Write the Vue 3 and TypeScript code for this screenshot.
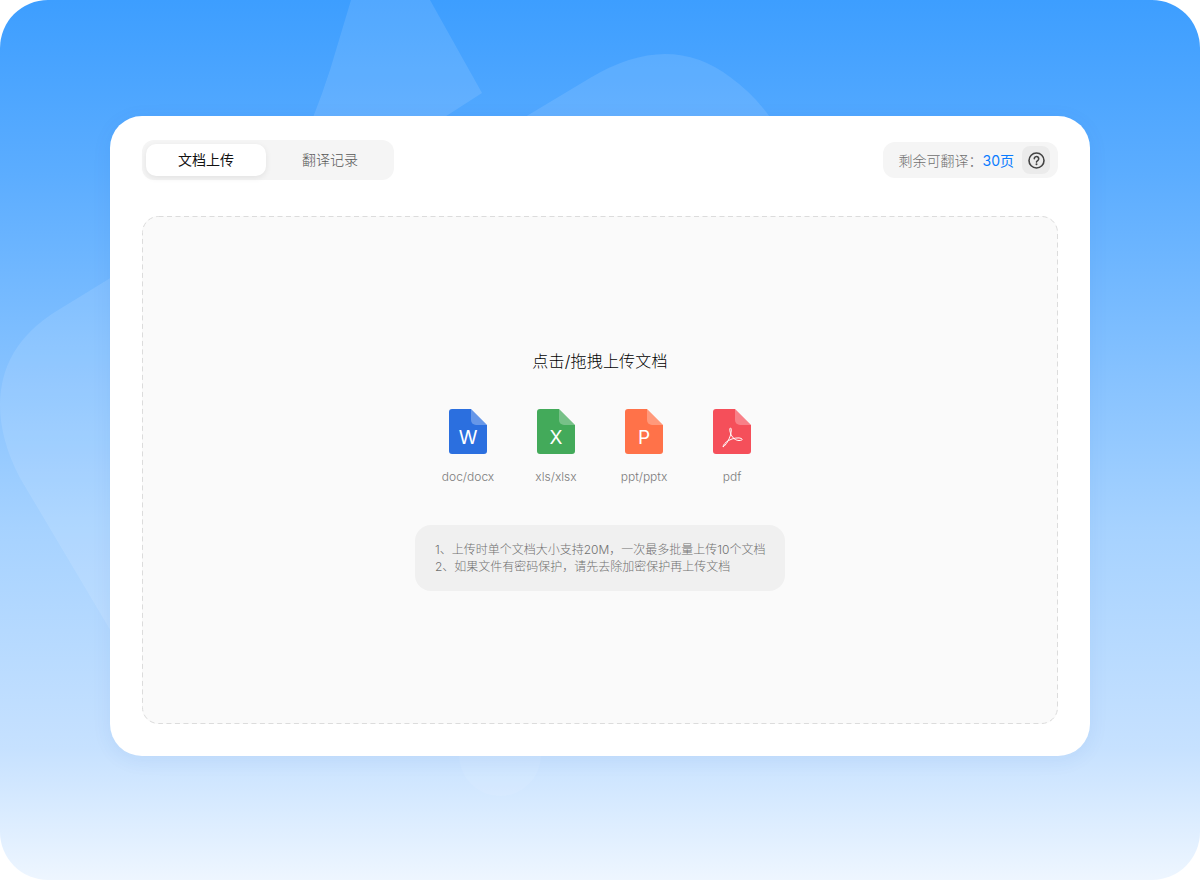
<script setup lang="ts">
import { ref } from 'vue'

interface FileType {
  letter: string
  label: string
  color: string
}

const tabs: string[] = ['文档上传', '翻译记录']
const active = ref(0)
const types: FileType[] = [
  { letter: 'W', label: 'doc/docx', color: '#2b6fdf' },
  { letter: 'X', label: 'xls/xlsx', color: '#43aa5a' },
  { letter: 'P', label: 'ppt/pptx', color: '#ff7249' },
  { letter: '', label: 'pdf', color: '#f54f5a' },
]
</script>

<template>
  <div class="page">
    <svg class="decor" width="1200" height="880" viewBox="0 0 1200 880" aria-hidden="true">
      <path d="M351 0 L430 0 L482 93 L440 120 L312 120 Q322 95 330 70 Z" />
      <path d="M520 120 L590 78 Q630 54 665 54 Q700 54 730 77 Q755 95 772 120 Z" />
      <path d="M112 277 L55 312 Q0 347 0 405 Q0 440 20 478 L112 633 Z" />
      <circle class="faint" cx="500" cy="755" r="41" />
    </svg>

    <main class="card">
      <header class="top">
        <div class="tabs">
          <button
            v-for="(t, i) in tabs"
            :key="t"
            class="tab"
            :class="{ on: active === i }"
            @click="active = i"
          >{{ t }}</button>
        </div>
        <div class="quota">
          <span class="quota-label">剩余可翻译：</span>
          <span class="quota-num">30页</span>
          <button class="help" aria-label="帮助">
            <svg width="17" height="17" viewBox="0 0 17 17" fill="none">
              <circle cx="8.500" cy="8.500" r="7.500" stroke="#444" stroke-width="1.600" />
              <path d="M6.300 6.800a2.200 2.200 0 1 1 3.400 1.800c-.8.500-1.200.9-1.200 1.500" stroke="#444" stroke-width="1.600" stroke-linecap="round" />
              <circle cx="8.500" cy="12.300" r="1" fill="#444" />
            </svg>
          </button>
        </div>
      </header>

      <section class="drop">
        <svg class="dash" width="916" height="508" viewBox="0 0 916 508" fill="none" aria-hidden="true">
          <rect x=".5" y=".5" width="915" height="507" rx="16" stroke="#dcdcdc" stroke-dasharray="5 3.500" />
        </svg>
        <h1 class="title">点击/拖拽上传文档</h1>
        <div class="types">
          <div v-for="f in types" :key="f.label" class="type">
            <svg width="38" height="45" viewBox="0 0 38 45">
              <path d="M3 0H22L38 16V42a3 3 0 0 1-3 3H3a3 3 0 0 1-3-3V3a3 3 0 0 1 3-3Z" :fill="f.color" />
              <path d="M22 0L38 16H27a5 5 0 0 1-5-5Z" fill="#fff" fill-opacity=".28" />
              <text v-if="f.letter" x="19" y="35" text-anchor="middle" class="letter">{{ f.letter }}</text>
              <path
                v-else
                d="M10 38C13 36 16 31 17.500 26C18.500 22 18.500 19 17.500 19C16.500 19 16.500 22 18 25.500C20 29.500 23 31.500 26 31.500C29 31.500 30 30.500 28.500 29.500C26 28.200 20 29 15.500 31.500C12.500 33.200 10 36 10 38Z"
                fill="none"
                stroke="#fff"
                stroke-width="1"
              />
            </svg>
            <span class="type-label">{{ f.label }}</span>
          </div>
        </div>
        <div class="notes">
          <p>1、上传时单个文档大小支持20M，一次最多批量上传10个文档</p>
          <p>2、如果文件有密码保护，请先去除加密保护再上传文档</p>
        </div>
      </section>
    </main>
  </div>
</template>

<style>
html, body { margin: 0; background: #fff; }
</style>

<style scoped>
.page {
  position: relative;
  box-sizing: border-box;
  width: 1200px;
  height: 880px;
  padding: 116px 110px 124px;
  border-radius: 48px;
  overflow: hidden;
  background: linear-gradient(180deg, #3d9eff 0%, #5cadff 20%, #a6d2ff 60%, #c6e1ff 85%, #eef6ff 100%);
  font-family: Inter, "Noto Sans CJK SC", sans-serif;
  font-weight: 300;
}
.decor {
  position: absolute;
  inset: 0;
}
.decor path, .decor circle {
  fill: #fff;
  fill-opacity: 0.11;
}
.decor .faint {
  fill-opacity: 0.08;
}
.card {
  position: relative;
  box-sizing: border-box;
  height: 640px;
  padding: 24px 32px 32px;
  border-radius: 32px;
  background: #fff;
  box-shadow: 0 4px 20px rgba(30, 90, 170, 0.07);
  display: flex;
  flex-direction: column;
}
.top {
  display: flex;
  justify-content: space-between;
  align-items: center;
  height: 40px;
  margin-bottom: 36px;
}
.tabs {
  display: flex;
  gap: 4px;
  padding: 4px;
  border-radius: 12px;
  background: #f5f5f5;
}
.tab {
  width: 120px;
  height: 32px;
  padding: 0;
  border: 0;
  border-radius: 10px;
  background: transparent;
  color: #555;
  font: 300 14px/32px Inter, "Noto Sans CJK SC", sans-serif;
  cursor: pointer;
}
.tab.on {
  background: #fff;
  color: #111;
  font-weight: 400;
  box-shadow: 0 2px 6px rgba(0, 0, 0, 0.08);
}
.quota {
  display: flex;
  align-items: center;
  height: 36px;
  padding: 0 8px 0 16px;
  border-radius: 12px;
  background: #f5f5f5;
  font-size: 14px;
}
.quota-label { color: #707070; }
.quota-num { color: #0a7cff; margin-right: 8px; font-weight: 400; }
.help {
  display: flex;
  align-items: center;
  justify-content: center;
  width: 28px;
  height: 28px;
  padding: 0;
  border: 0;
  border-radius: 8px;
  background: #ebebeb;
  cursor: pointer;
}
.drop {
  position: relative;
  flex: 1;
  display: flex;
  flex-direction: column;
  align-items: center;
  justify-content: center;
  border-radius: 16px;
  background: #fafafa;
}
.dash {
  position: absolute;
  inset: 0;
}
.title {
  margin: 0 0 37px;
  color: #000;
  font-size: 16px;
  font-weight: 300;
  line-height: 22px;
  letter-spacing: 0.2px;
}
.types {
  display: flex;
  margin-bottom: 40px;
}
.type {
  width: 88px;
  display: flex;
  flex-direction: column;
  align-items: center;
}
.letter {
  fill: #fff;
  font-family: Inter, sans-serif;
  font-size: 19px;
  font-weight: 400;
}
.type-label {
  margin-top: 14px;
  color: #7c7c7c;
  font-size: 12px;
  line-height: 17px;
}
.notes {
  box-sizing: border-box;
  width: 370px;
  height: 66px;
  padding: 16px 20px;
  border-radius: 16px;
  background: #f0f0f0;
  color: #707070;
  font-size: 12px;
  line-height: 17px;
}
.notes p {
  margin: 0;
  white-space: nowrap;
}
</style>
